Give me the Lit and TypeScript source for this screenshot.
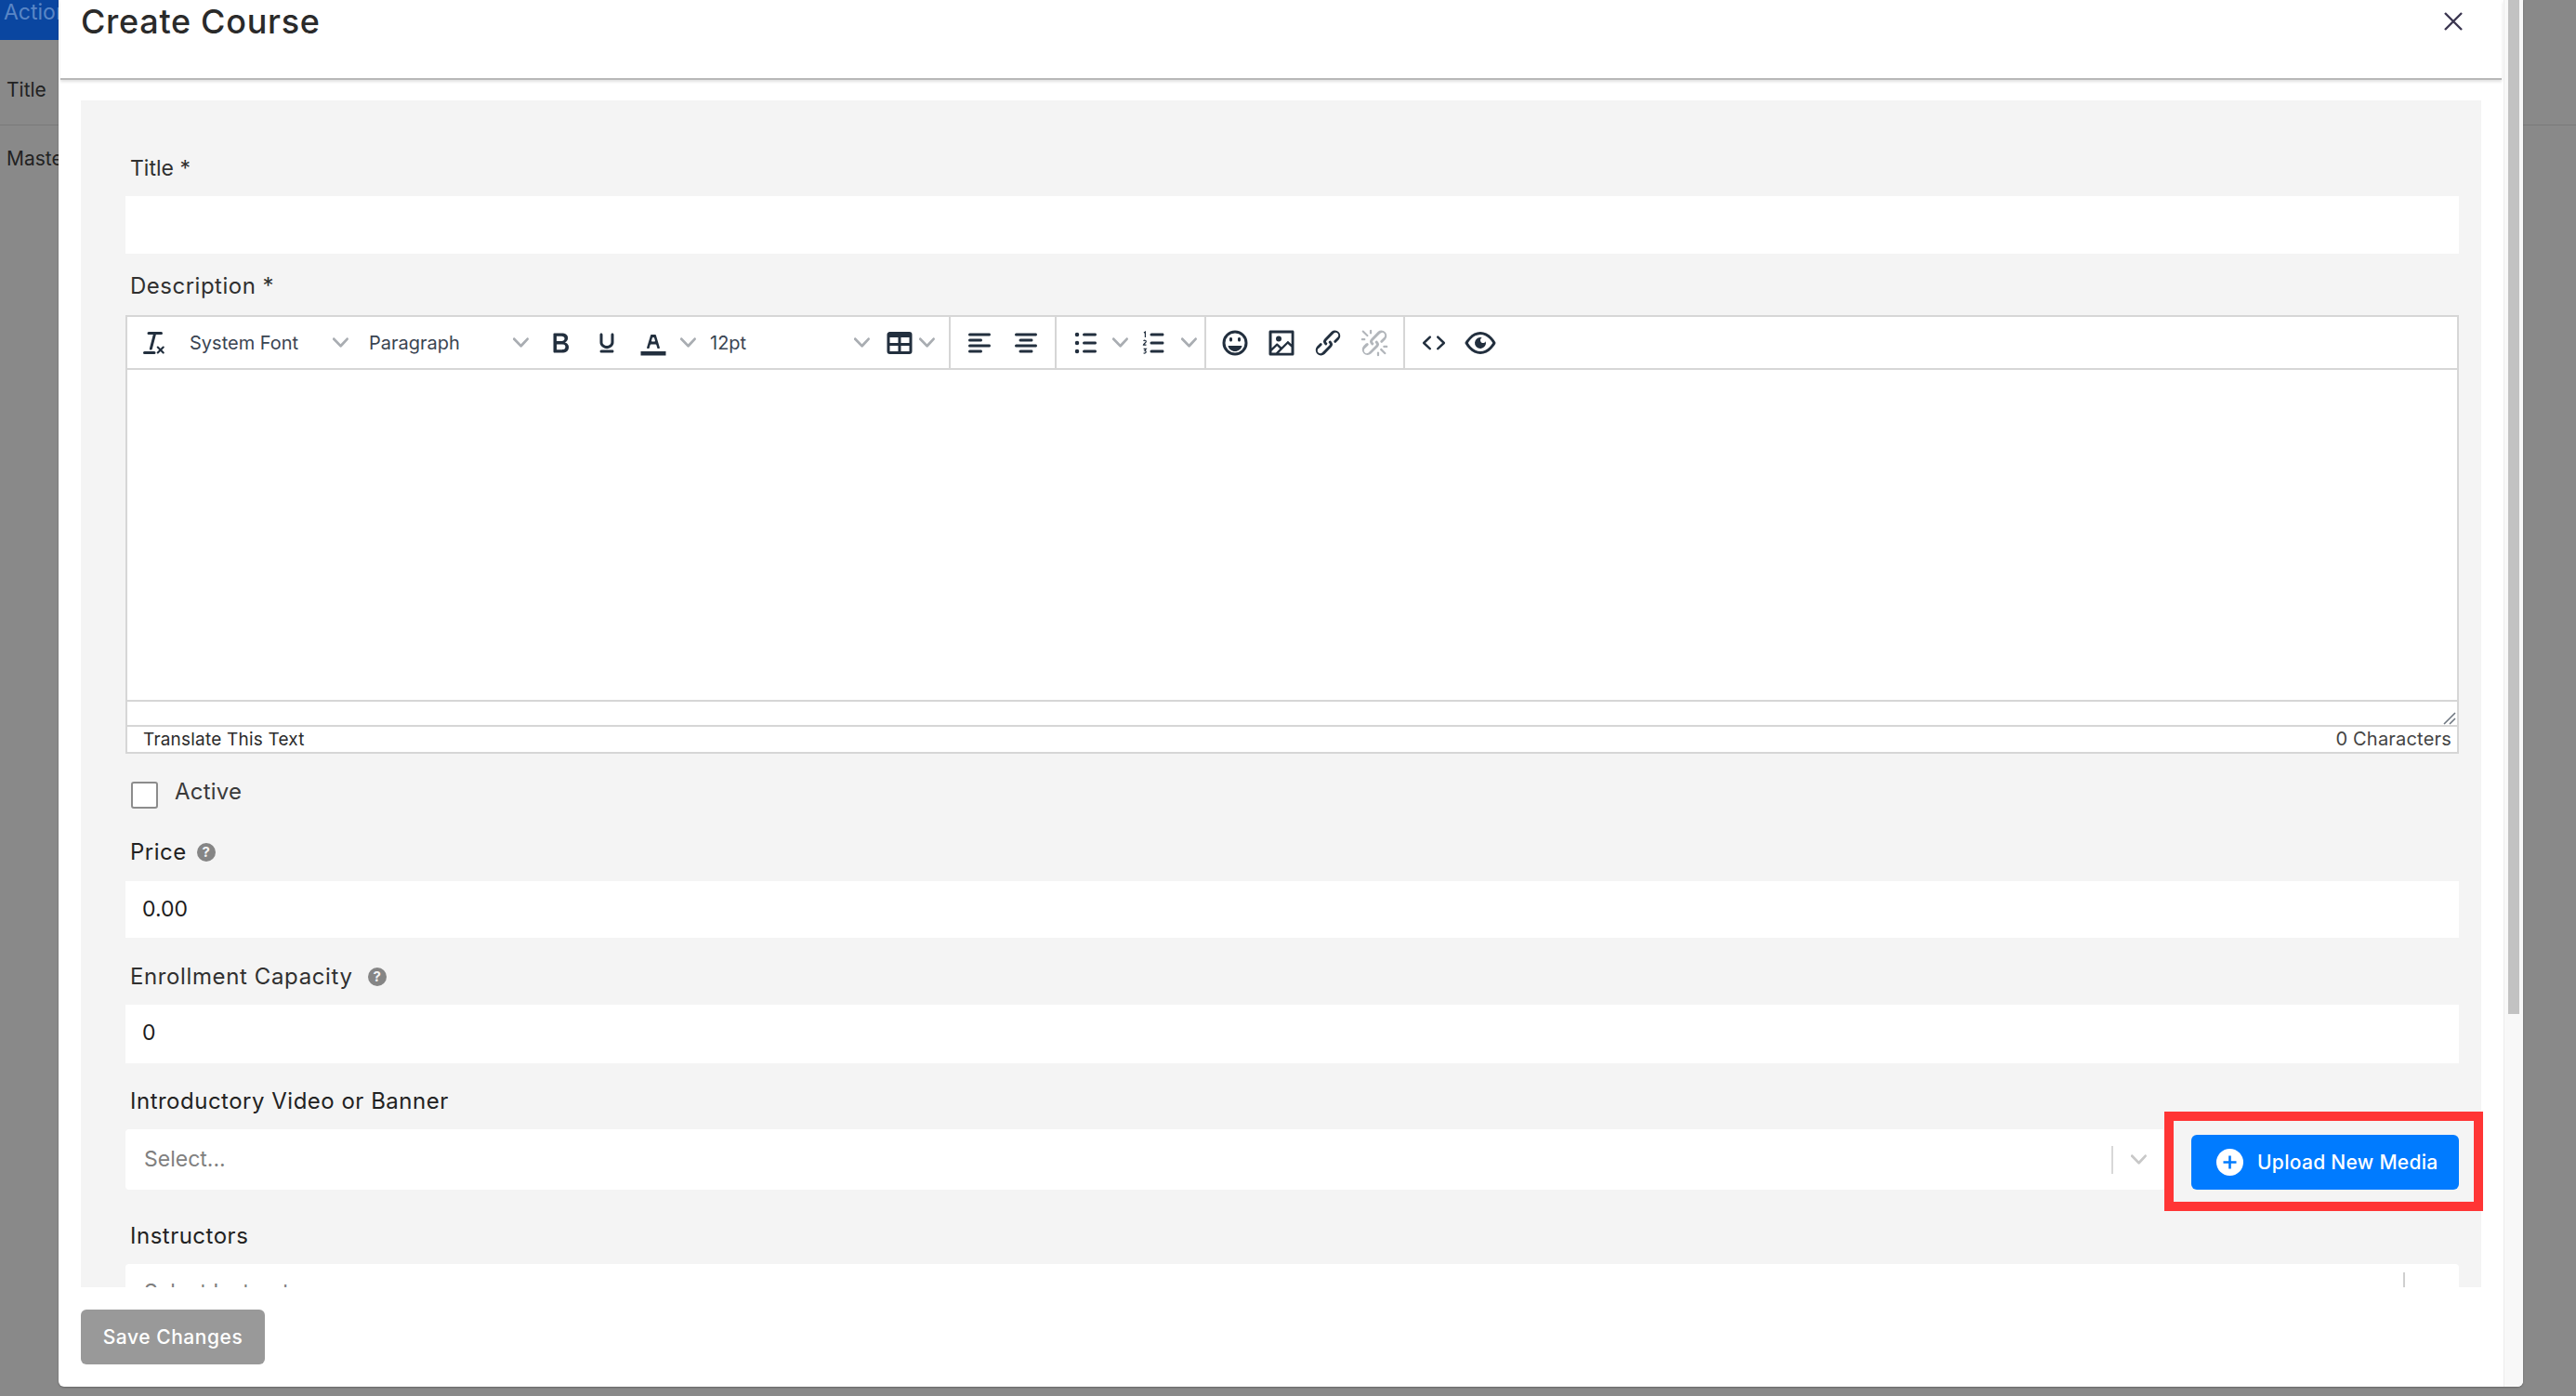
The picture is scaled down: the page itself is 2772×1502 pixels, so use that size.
import { LitElement, html, css, svg } from "lit";
import { customElement } from "lit/decorators.js";

const I: Record<string, any> = {
  tx: svg`<path d="M13.2 6a1 1 0 010 .2l-2.6 10a1 1 0 01-1 .8h-.2a.8.8 0 01-.8-1l2.6-10H8a1 1 0 110-2h9a1 1 0 010 2h-3.8zM5 18h7a1 1 0 010 2H5a1 1 0 010-2zm13 1.5L16.5 18 15 19.5a.7.7 0 01-1-1l1.5-1.5-1.5-1.5a.7.7 0 011-1l1.5 1.5 1.5-1.5a.7.7 0 011 1L17.5 17l1.5 1.5a.7.7 0 01-1 1z"/>`,
  bold: svg`<path d="M7.8 19c-.3 0-.5 0-.6-.2l-.2-.5V5.7c0-.2 0-.4.2-.5l.6-.2h5c1.5 0 2.7.3 3.5 1 .7.6 1.1 1.4 1.1 2.5a3 3 0 01-.6 1.9c-.4.6-1 1-1.6 1.2.4.1.9.3 1.3.6s.8.7 1 1.2c.4.4.5 1 .5 1.6 0 1.3-.4 2.3-1.3 3-.8.7-2.1 1-3.8 1H7.8zm5-8.3c.6 0 1.2-.1 1.6-.5.4-.3.6-.7.6-1.3 0-1.1-.8-1.7-2.3-1.7H9.3v3.5h3.4zm.5 6c.7 0 1.3-.1 1.7-.4.4-.4.6-.9.6-1.5s-.2-1-.7-1.4c-.4-.3-1-.4-2-.4H9.4v3.8h4z"/>`,
  under: svg`<path d="M16 5c.6 0 1 .4 1 1v5.5a4 4 0 01-.4 1.8l-1 1.4a5.3 5.3 0 01-5.5 1 5 5 0 01-1.6-1c-.5-.4-.8-.9-1.1-1.4a4 4 0 01-.4-1.8V6c0-.6.4-1 1-1s1 .4 1 1v5.5c0 .3 0 .6.2 1l.6.7a3.3 3.3 0 002.2.8 3.4 3.4 0 002.2-.8c.3-.2.4-.5.6-.8l.2-.9V6c0-.6.4-1 1-1zM8 17h8c.6 0 1 .4 1 1s-.4 1-1 1H8a1 1 0 010-2z"/>`,
  color: svg`<path d="M3 18h18v3H3z"/><path fill-rule="evenodd" d="M8.7 16h-.8a.5.5 0 01-.5-.6l2.7-9c.1-.3.3-.4.5-.4h2.8c.2 0 .4.1.5.4l2.7 9a.5.5 0 01-.5.6h-.8a.5.5 0 01-.4-.4l-.7-2.2c0-.3-.3-.4-.5-.4h-3.4c-.2 0-.4.1-.5.4l-.7 2.2c0 .3-.2.4-.4.4zm2.6-7.6l-.6 2a.5.5 0 00.5.6h1.6a.5.5 0 00.5-.6l-.6-2c0-.3-.3-.4-.5-.4h-.4c-.2 0-.4.1-.5.4z"/>`,
  table: svg`<path fill-rule="evenodd" d="M19 4a2 2 0 012 2v12a2 2 0 01-2 2H5a2 2 0 01-2-2V6c0-1.1.9-2 2-2h14zM5 14v4h6v-4H5zm14 0h-6v4h6v-4zm0-6h-6v4h6V8zM5 12h6V8H5v4z"/>`,
  left: svg`<path d="M5 5h14c.6 0 1 .4 1 1s-.4 1-1 1H5a1 1 0 110-2zm0 4h8c.6 0 1 .4 1 1s-.4 1-1 1H5a1 1 0 110-2zm0 8h8c.6 0 1 .4 1 1s-.4 1-1 1H5a1 1 0 010-2zm0-4h14c.6 0 1 .4 1 1s-.4 1-1 1H5a1 1 0 010-2z"/>`,
  center: svg`<path d="M5 5h14c.6 0 1 .4 1 1s-.4 1-1 1H5a1 1 0 110-2zm3 4h8c.6 0 1 .4 1 1s-.4 1-1 1H8a1 1 0 110-2zm0 8h8c.6 0 1 .4 1 1s-.4 1-1 1H8a1 1 0 010-2zm-3-4h14c.6 0 1 .4 1 1s-.4 1-1 1H5a1 1 0 010-2z"/>`,
  ul: svg`<path d="M11 5h8c.6 0 1 .4 1 1s-.4 1-1 1h-8a1 1 0 010-2zm0 6h8c.6 0 1 .4 1 1s-.4 1-1 1h-8a1 1 0 010-2zm0 6h8c.6 0 1 .4 1 1s-.4 1-1 1h-8a1 1 0 010-2z"/><circle cx="6" cy="6" r="1.5"/><circle cx="6" cy="12" r="1.5"/><circle cx="6" cy="18" r="1.5"/>`,
  ol: svg`<path d="M10 17h8c.6 0 1 .4 1 1s-.4 1-1 1h-8a1 1 0 010-2zm0-6h8c.6 0 1 .4 1 1s-.4 1-1 1h-8a1 1 0 010-2zm0-6h8c.6 0 1 .4 1 1s-.4 1-1 1h-8a1 1 0 110-2z"/><path fill="none" stroke="currentColor" stroke-width=".8" d="M4.6 4.6l1-.6v4M4.4 10.6c.4-.7 1.8-.6 1.8.4 0 .8-1.8 1.5-1.9 2.4h2M4.4 16.2h1.8l-1 1.3c1.2-.1 1.4 2.3-.8 1.8"/>`,
  emoji: svg`<path fill-rule="evenodd" d="M12 3a9 9 0 110 18 9 9 0 010-18zm0 2a7 7 0 100 14 7 7 0 000-14zM9 8c.6 0 1 .4 1 1v1c0 .6-.4 1-1 1s-1-.4-1-1V9c0-.6.4-1 1-1zm6 0c.6 0 1 .4 1 1v1c0 .6-.4 1-1 1s-1-.4-1-1V9c0-.6.4-1 1-1zm2 6c-.5 2.3-2.5 4-5 4s-4.5-1.7-5-4h10z"/>`,
  image: svg`<path fill-rule="evenodd" d="M5 15.7l3.3-3.2c.3-.3.7-.3 1 0L12 15l4.1-4c.3-.4.8-.4 1 0l2 1.9V5H5v10.7zM5 18V19h3l2.8-2.9-2-2L5 17.9zm14-3l-2.5-2.4-6.4 6.5H19v-4zM4 3h16c.6 0 1 .4 1 1v16c0 .6-.4 1-1 1H4a1 1 0 01-1-1V4c0-.6.4-1 1-1zm6 8a2 2 0 100-4 2 2 0 000 4z"/>`,
  link: svg`<path d="M6.2 12.3a1 1 0 011.4 1.4l-2 2a2 2 0 102.6 2.8l4.8-4.8a1 1 0 000-1.4 1 1 0 111.4-1.3 2.9 2.9 0 010 4L9.6 20a3.9 3.9 0 01-5.5-5.5l2-2zm11.6-.6a1 1 0 01-1.4-1.4l2-2a2 2 0 10-2.6-2.8L11 10.3a1 1 0 000 1.4A1 1 0 119.6 13a2.9 2.9 0 010-4L14.4 4a3.9 3.9 0 015.5 5.5l-2 2z"/>`,
  unlink: svg`<path d="M6.2 12.3a1 1 0 011.4 1.4l-2.1 2a2 2 0 102.7 2.8l4.8-4.8a1 1 0 000-1.4 1 1 0 111.4-1.3 2.9 2.9 0 010 4l-4.8 4.7a3.9 3.9 0 01-5.5-5.5l2-2zm11.6-.6a1 1 0 01-1.4-1.4l2.1-2a2 2 0 10-2.7-2.8L11 10.3a1 1 0 000 1.4A1 1 0 119.6 13a2.9 2.9 0 010-4L14.4 4a3.9 3.9 0 015.5 5.5l-2 2zM7.6 6.3a.8.8 0 01-1 1.1L3.3 4.2a.7.7 0 111-1l3.2 3.1zM5.1 8.6a.8.8 0 010 1.5H3a.8.8 0 010-1.5H5zm5-3.5a.8.8 0 01-1.5 0V3a.8.8 0 011.5 0v2zm6 11.8a.8.8 0 011-1l3.2 3.2a.8.8 0 01-1 1L16 17zm-2.2 2a.8.8 0 011.5 0V21a.8.8 0 01-1.5 0V19zm5-3.5a.7.7 0 110-1.5H21a.8.8 0 010 1.5H19z"/>`,
  code: svg`<path d="M9.8 15.7c.3.3.3.8 0 1-.3.4-.9.4-1.2 0l-4.4-4.1a.8.8 0 010-1.2l4.4-4.2c.3-.3.9-.3 1.2 0 .3.3.3.8 0 1.1L6 12l3.8 3.7zm4.4 0c-.3.3-.3.8 0 1 .3.4.9.4 1.2 0l4.4-4.1c.3-.3.3-.9 0-1.2l-4.4-4.2a.8.8 0 00-1.2 0c-.3.3-.3.8 0 1.1L18 12l-3.8 3.7z"/>`,
  eye: svg`<path fill-rule="evenodd" d="M3.5 12.5c.5.8 1.1 1.6 1.8 2.3 2 2 4.2 3.2 6.7 3.2s4.7-1.2 6.7-3.2a16.2 16.2 0 002.1-2.8 15.7 15.7 0 00-2.1-2.8c-2-2-4.2-3.2-6.7-3.2a9.3 9.3 0 00-6.7 3.2A16.2 16.2 0 003.2 12c0 .2.2.3.3.5zm-2.4-1l.7-1.2L4 7.8C6.2 5.4 8.9 4 12 4c3 0 5.8 1.4 8.1 3.8a18.2 18.2 0 012.8 3.7v1l-.7 1.2-2.1 2.5c-2.3 2.4-5 3.8-8.1 3.8-3 0-5.8-1.4-8.1-3.8a18.2 18.2 0 01-2.8-3.7 1 1 0 010-1zm12-3.3a2 2 0 102.7 2.6 4 4 0 11-2.6-2.6z"/>`,
};

const chevPath = "M8.7 2.2c.3-.3.8-.3 1 0 .4.4.4.9 0 1.2L5.7 7.8c-.3.3-.9.3-1.2 0L.2 3.4a.8.8 0 010-1.2c.3-.3.8-.3 1.1 0L5 6l3.7-3.8z";
const chev = (cls = "") => html`<span class="chev ${cls}"><svg width="17" height="17" viewBox="0 0 10 10"><path d=${chevPath} /></svg></span>`;
const btn = (n: string, w = 50, off = false) =>
  html`<span class="btn ${off ? "off" : ""}" style="width:${w}px"><svg width="36" height="36" viewBox="0 0 24 24">${I[n]}</svg></span>`;
const sel = (t: string, w: number, cls = "") =>
  html`<span class="sel ${cls}" style="width:${w}px"><span>${t}</span>${chev()}</span>`;
const help = () => html`<span class="help">?</span>`;

@customElement("app-root")
export class AppRoot extends LitElement {
  static styles = css`
    :host {
      display: block;
      position: relative;
      width: 2772px;
      height: 1502px;
      overflow: hidden;
      background: #898989;
      font-family: Inter, "Noto Sans", sans-serif;
      color: #2b2b2b;
    }
    .bg-head {
      height: 43px;
      width: 63px;
      overflow: hidden;
      background: #0a46a0;
      color: #5a86c6;
      font-size: 23px;
      line-height: 26px;
      padding-left: 4px;
      box-sizing: border-box;
      white-space: nowrap;
    }
    .bg-row {
      height: 92px;
      border-bottom: 1px solid #7a7a7a;
      box-sizing: border-box;
      padding: 41px 0 0 7px;
      font-size: 21px;
      line-height: 26px;
      color: #222;
    }
    .bg-row2 {
      padding: 23px 0 0 7px;
      font-size: 21px;
      line-height: 26px;
      color: #222;
    }
    .modal {
      position: absolute;
      left: 63px;
      top: 0;
      width: 2652px;
      height: 1492px;
      background: #fff;
      border-radius: 0 0 6px 6px;
      box-shadow: 0 1px 2px rgba(0, 0, 0, 0.25);
      display: flex;
      overflow: hidden;
    }
    .main {
      flex: 1;
      min-width: 0;
      display: flex;
      flex-direction: column;
    }
    .track {
      width: 21px;
      box-sizing: border-box;
      background: #f8f8f8;
      border-left: 1px solid #ececec;
      padding: 0 4px;
    }
    .thumb {
      height: 1091px;
      background: #c2c2c2;
    }
    .head {
      height: 86px;
      flex: none;
      margin: 0 2px;
      box-sizing: border-box;
      border-bottom: 2px solid #b8b8b8;
      display: flex;
      justify-content: space-between;
      padding: 0 42px 0 22px;
      box-shadow: 0 2px 3px rgba(0, 0, 0, 0.12);
    }
    .head h1 {
      margin: 0;
      font-size: 36px;
      font-weight: 500;
      line-height: 46px;
      color: #2a2a2a;
      letter-spacing: 0.7px;
    }
    .close {
      width: 20px;
      height: 20px;
      margin-top: 13px;
      color: #3b3650;
    }
    .panel {
      flex: 1;
      min-height: 0;
      overflow: hidden;
      background: #f4f4f4;
      margin: 22px 24px 0 24px;
      padding: 57px 24px 0 48px;
    }
    .label {
      height: 32px;
      line-height: 32px;
      padding-left: 5px;
      font-size: 24px;
      letter-spacing: 0.5px;
      color: #303030;
      display: flex;
      align-items: center;
      gap: 14px;
      white-space: nowrap;
    }
    .label.tight { font-size: 23px; letter-spacing: 0; }
    .label.price-label { gap: 11px; }
    .label.wide { letter-spacing: 0.62px; gap: 16px; }
    .label.dark { color: #222; }
    .help {
      width: 20px;
      height: 20px;
      border-radius: 50%;
      background: #858585;
      color: #f4f4f4;
      font-size: 15px;
      font-weight: 700;
      line-height: 20px;
      text-align: center;
      letter-spacing: 0;
    }
    .input {
      background: #fff;
      height: 62px;
      line-height: 60px;
      padding-left: 18px;
      font-size: 23px;
      color: #1c1c1c;
      margin-top: 14px;
    }
    .input.price { height: 61px; margin-top: 15px; }
    .input.tall { height: 63px; }
    .gap10 { margin-top: 12px; }
    .gap19 { margin-top: 19px; }
    .gap26 { margin-top: 26px; }
    .gap25 { margin-top: 25px; }
    .gap34 { margin-top: 34px; }
    .editor {
      margin-top: 15px;
      height: 472px;
      box-sizing: border-box;
      border: 2px solid #d6d6d6;
      background: #fff;
      display: flex;
      flex-direction: column;
    }
    .toolbar {
      height: 57px;
      flex: none;
      box-sizing: border-box;
      border-bottom: 2px solid #d6d6d6;
      display: flex;
    }
    .group {
      display: flex;
      align-items: center;
      box-sizing: border-box;
      padding: 0 6px;
      border-right: 2px solid #d6d6d6;
    }
    .group.first { padding: 0 15px 0 4px; }
    .group.second { padding-left: 6px; }
    .group.third { padding-right: 5px; }
    .group.last { border-right: none; }
    .btn {
      display: flex;
      justify-content: center;
      align-items: center;
      flex: none;
      height: 36px;
      color: #222f3e;
    }
    .btn svg { fill: currentColor; display: block; }
    .btn.off { color: #b2b6bb; }
    .chev {
      flex: none;
      width: 24px;
      display: flex;
      justify-content: center;
      align-items: center;
    }
    .chev svg { fill: #a9adb2; display: block; }
    .chev.narrow { width: 18px; margin-left: -3px; }
    .sel {
      flex: none;
      display: flex;
      align-items: center;
      justify-content: space-between;
      box-sizing: border-box;
      padding-left: 13px;
      padding-right: 6px;
      font-size: 20px;
      color: #3a4452;
    }
    .sel.pt { padding-left: 12px; }
    .area { flex: 1; border-bottom: 2px solid #d6d6d6; }
    .grip {
      height: 27px;
      flex: none;
      box-sizing: border-box;
      border-bottom: 2px solid #d6d6d6;
      display: flex;
      justify-content: flex-end;
      align-items: flex-end;
    }
    .grip svg { display: block; margin: 0 1px 0 0; }
    .status {
      height: 27px;
      flex: none;
      display: flex;
      justify-content: space-between;
      align-items: center;
      padding: 0 6px 0 17px;
      font-size: 19px;
      letter-spacing: 0.2px;
      color: #2c2c2c;
    }
    .status .count { color: #444; font-size: 20px; position: relative; top: -1px; }
    .active {
      margin-top: 30px;
      height: 48px;
      padding-left: 6px;
      display: flex;
      gap: 18px;
      font-size: 24px;
      letter-spacing: 0.2px;
      color: #3a3a3a;
      line-height: 22px;
    }
    .check {
      width: 29px;
      height: 29px;
      box-sizing: border-box;
      background: #fff;
      border: 2px solid #8c8c8c;
      border-radius: 3px;
      flex: none;
    }
    .select {
      background: #fff;
      border-radius: 4px;
      display: flex;
      align-items: center;
      font-size: 23px;
      color: #808080;
      padding-left: 20px;
    }
    .select .ph { flex: 1; white-space: nowrap; padding-bottom: 2px; }
    .select .bar { width: 2px; height: 30px; background: #d8d8d8; flex: none; }
    .select .cv { width: 56px; flex: none; display: flex; justify-content: center; }
    .select .cv svg { fill: #c8c8c8; display: block; margin-left: -2px; }
    .media {
      display: flex;
      gap: 28px;
      margin-top: 14px;
      align-items: flex-end;
    }
    .media .select { flex: 1; height: 65px; margin: 0; }
    .upload {
      width: 288px;
      height: 59px;
      flex: none;
      background: #007bff;
      color: #fff;
      border-radius: 6px;
      display: flex;
      align-items: center;
      box-sizing: border-box;
      padding-left: 27px;
      gap: 15px;
      font-size: 21px;
      font-weight: 500;
      letter-spacing: 0.3px;
      white-space: nowrap;
    }
    .upload svg { display: block; flex: none; }
    .inst { margin-top: 14px; height: 65px; }
    .inst .ph { padding-bottom: 6px; }
    .inst .bar { margin-right: 58px; height: 18px; margin-top: -30px; background: #cfcfcf; }
    .foot {
      flex: none;
      height: 107px;
      box-sizing: border-box;
      padding: 24px 0 0 24px;
    }
    .save {
      width: 198px;
      height: 59px;
      background: #999;
      color: #fff;
      border-radius: 6px;
      display: flex;
      justify-content: center;
      align-items: center;
      font-size: 21px;
      font-weight: 500;
      letter-spacing: 0.55px;
      white-space: nowrap;
    }
    .mark {
      position: absolute;
      left: 2329px;
      top: 1196px;
      width: 343px;
      height: 107px;
      box-sizing: border-box;
      border: 10px solid #ff3535;
    }
  `;

  render() {
    return html`
      <div class="bg-head">Action</div>
      <div class="bg-row">Title</div>
      <div class="bg-row2">Maste</div>

      <div class="modal">
        <div class="main">
          <div class="head">
            <h1>Create Course</h1>
            <svg class="close" viewBox="0 0 20 20" fill="none" stroke="currentColor" stroke-width="2.4"><path d="M1 1l18 18M19 1L1 19" /></svg>
          </div>
          <div class="panel">
            <div class="label tight">Title *</div>
            <div class="input"></div>

            <div class="label gap19">Description *</div>
            <div class="editor">
              <div class="toolbar">
                <div class="group first">
                  ${btn("tx")}${sel("System Font", 193)}${sel("Paragraph", 194)}${btn("bold")}${btn("under")}${btn("color")}${chev()}${sel("12pt", 193, "pt")}${btn("table", 46)}${chev("narrow")}
                </div>
                <div class="group second">${btn("left")}${btn("center")}</div>
                <div class="group third">${btn("ul")}${chev()}${btn("ol")}${chev()}</div>
                <div class="group">${btn("emoji")}${btn("image")}${btn("link")}${btn("unlink", 50, true)}</div>
                <div class="group last">${btn("code")}${btn("eye")}</div>
              </div>
              <div class="area"></div>
              <div class="grip">
                <svg width="14" height="14" viewBox="0 0 14 14" fill="none" stroke="#6f7781" stroke-width="1.6"><path d="M1 13L13 1M7 13l6-6" /></svg>
              </div>
              <div class="status"><span>Translate This Text</span><span class="count">0 Characters</span></div>
            </div>

            <div class="active"><span class="check"></span><span>Active</span></div>

            <div class="label gap10 dark price-label">Price ${help()}</div>
            <div class="input price">0.00</div>

            <div class="label gap26 wide">Enrollment Capacity ${help()}</div>
            <div class="input tall">0</div>

            <div class="label gap25 dark">Introductory Video or Banner</div>
            <div class="media">
              <div class="select">
                <span class="ph">Select...</span><span class="bar"></span>
                <span class="cv"><svg width="17" height="17" viewBox="0 0 10 10"><path d=${chevPath} /></svg></span>
              </div>
              <div class="upload">
                <svg width="29" height="29" viewBox="0 0 29 29"><circle cx="14.5" cy="14.5" r="14.5" fill="#fff" /><path d="M14.5 7.5v14M7.5 14.5h14" stroke="#007bff" stroke-width="2.6" /></svg>
                Upload New Media
              </div>
            </div>

            <div class="label gap34 dark">Instructors</div>
            <div class="select inst">
              <span class="ph">Select Instructor</span><span class="bar"></span>
            </div>
          </div>
          <div class="foot"><div class="save">Save Changes</div></div>
        </div>
        <div class="track"><div class="thumb"></div></div>
      </div>

      <div class="mark"></div>
    `;
  }
}
